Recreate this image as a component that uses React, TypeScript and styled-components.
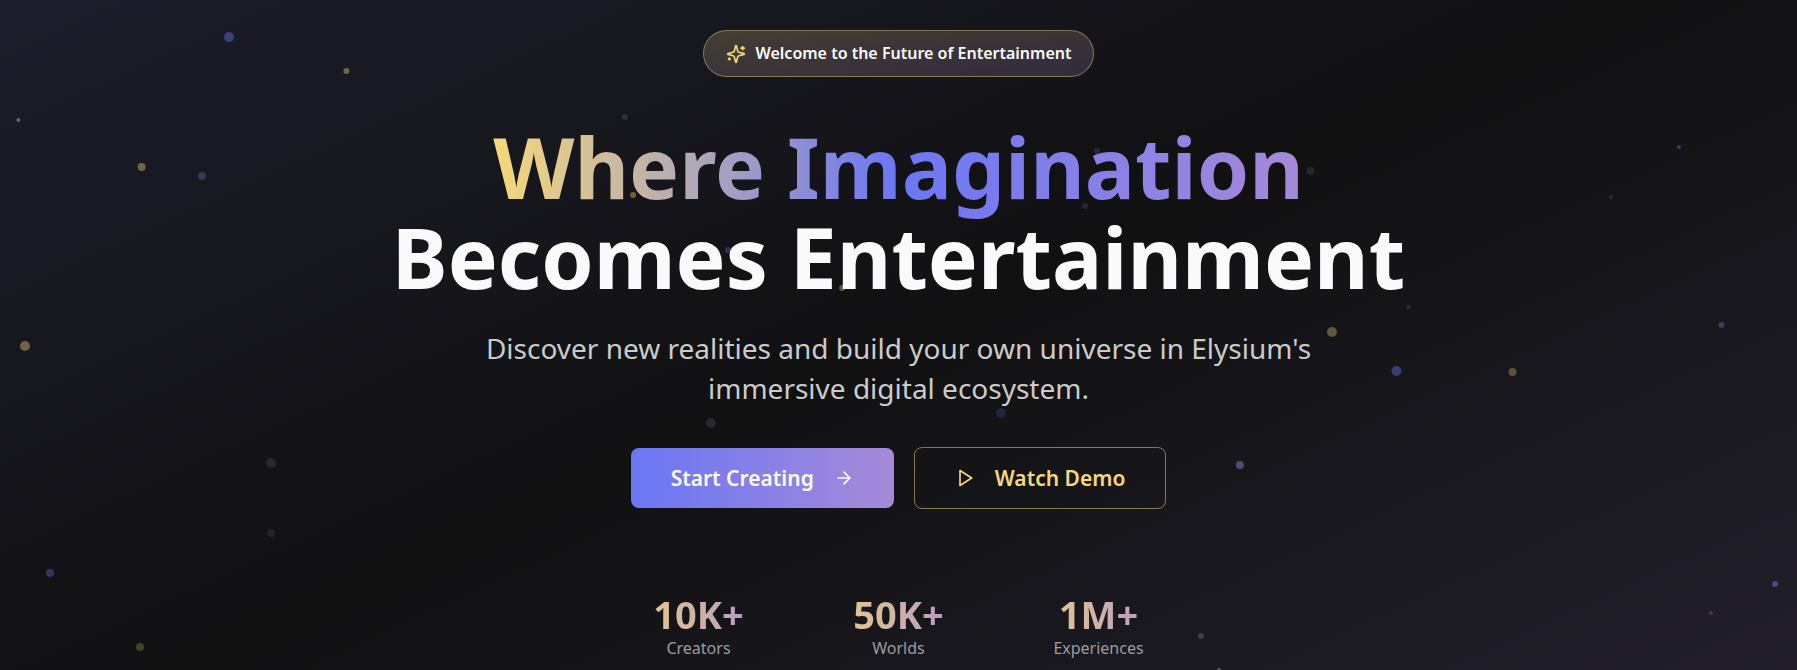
import React from "react";
import styled, { createGlobalStyle } from "styled-components";

const GlobalStyle = createGlobalStyle`
  *, *::before, *::after { box-sizing: border-box; }
  body {
    margin: 0;
    background: #111112;
    color: #fafafa;
    font-family: "Noto Sans", "Liberation Sans", sans-serif;
  }
`;

const GOLD = "#f5d87a";
const BLUE = "#6b76f5";
const LILAC = "#a58ad8";

const Hero = styled.main`
  position: relative;
  display: flex;
  flex-direction: column;
  align-items: center;
  min-height: 100vh;
  padding: 30px 24px 10px;
  overflow: hidden;
  text-align: center;
  background: linear-gradient(to bottom right, #1e1e2e, #111112 50%, #23202d) 0 -73px / 100% 827px no-repeat;
`;

const Sky = styled.svg`
  position: absolute;
  inset: 0;
  width: 100%;
  height: 100%;
  pointer-events: none;
`;

const Content = styled.div`
  position: relative;
  display: flex;
  flex-direction: column;
  align-items: center;
  width: 100%;
  max-width: 1152px;
`;

const Badge = styled.div`
  display: flex;
  align-items: center;
  gap: 10px;
  padding: 10px 22px;
  border: 1px solid rgba(248, 219, 123, 0.4);
  border-radius: 24px;
  background: linear-gradient(to bottom right, rgba(248, 219, 123, 0.2), rgba(165, 138, 216, 0.2));
  font-size: 16px;
  font-weight: 600;
  line-height: 25px;
`;

const Title = styled.h1`
  margin: 45px 0 0;
  font-size: 84px;
  font-weight: 700;
  line-height: 90px;
`;

/* The extra padding lets the clipped gradient reach the descenders. */
const TitleAccent = styled.span`
  display: block;
  width: fit-content;
  margin: 0 auto -16px;
  padding-bottom: 16px;
  background: linear-gradient(to right, ${GOLD}, ${BLUE} 50%, ${LILAC});
  background-clip: text;
  color: transparent;
`;

const TitleLine = styled.span`
  display: block;
`;

const Lead = styled.p`
  max-width: 896px;
  margin: 26px 0 0;
  color: #cbcbcc;
  font-size: 28px;
  line-height: 40px;
`;

const Actions = styled.div`
  display: flex;
  flex-wrap: wrap;
  align-items: center;
  justify-content: center;
  gap: 20px;
  margin-top: 39px;
`;

const Button = styled.button<{ $outline?: boolean }>`
  display: flex;
  align-items: center;
  gap: 20px;
  padding: 16px 40px;
  border: ${(p) => (p.$outline ? "1px solid rgba(248, 219, 123, 0.5)" : "0")};
  border-radius: 8px;
  background: ${(p) => (p.$outline ? "transparent" : `linear-gradient(to right, ${BLUE}, ${LILAC})`)};
  color: ${(p) => (p.$outline ? GOLD : "#fafafa")};
  font-family: inherit;
  font-size: 21px;
  font-weight: 600;
  line-height: 28px;
  cursor: pointer;
`;

const Icon = styled.svg`
  flex: none;
  width: 20px;
  height: 20px;
  fill: none;
  stroke: currentColor;
  stroke-width: 2;
  stroke-linecap: round;
  stroke-linejoin: round;
`;

const GoldIcon = styled(Icon)`
  color: ${GOLD};
`;

const Stats = styled.dl`
  display: grid;
  grid-template-columns: repeat(3, 1fr);
  gap: 24px;
  width: 100%;
  max-width: 576px;
  margin: 83px 0 0;
`;

const Stat = styled.div`
  display: flex;
  flex-direction: column-reverse;
`;

const StatValue = styled.dd`
  margin: 0;
  background: linear-gradient(to right, ${GOLD}, ${LILAC});
  background-clip: text;
  color: transparent;
  font-size: 38px;
  font-weight: 700;
  line-height: 44px;
`;

const StatLabel = styled.dt`
  color: #9c9c9e;
  font-size: 16px;
  line-height: 24px;
`;

type Particle = [left: number, top: number, radius: number, color: string, opacity: number];

const particles: Particle[] = [
  [12.74, 37, 5, BLUE, 0.42],
  [19.28, 71, 3, GOLD, 0.4],
  [1.02, 120, 2, GOLD, 0.4],
  [7.88, 167, 4, GOLD, 0.4],
  [11.24, 176, 4, LILAC, 0.26],
  [34.77, 117, 3, LILAC, 0.2],
  [35.23, 195, 3, GOLD, 0.4],
  [40.51, 250, 3, BLUE, 0.3],
  [46.86, 288, 3, GOLD, 0.35],
  [61.05, 151, 3, LILAC, 0.18],
  [72.93, 171, 4, LILAC, 0.15],
  [60.38, 206, 3, LILAC, 0.16],
  [63.94, 196, 2, GOLD, 0.35],
  [93.43, 147, 2, BLUE, 0.38],
  [89.65, 197, 2, BLUE, 0.22],
  [78.38, 307, 2, LILAC, 0.2],
  [95.8, 325, 3, LILAC, 0.3],
  [1.39, 346, 5, GOLD, 0.4],
  [15.08, 463, 5, LILAC, 0.15],
  [15.08, 533, 4, LILAC, 0.14],
  [2.78, 573, 4, BLUE, 0.34],
  [7.79, 647, 4, GOLD, 0.24],
  [39.55, 423, 5, LILAC, 0.17],
  [55.7, 413, 5, BLUE, 0.18],
  [74.12, 332, 5, GOLD, 0.34],
  [77.71, 371, 5, BLUE, 0.42],
  [84.17, 372, 4, GOLD, 0.32],
  [69, 465, 4, LILAC, 0.45],
  [98.78, 584, 3, BLUE, 0.5],
  [95.21, 613, 2, BLUE, 0.35],
  [66.83, 636, 3, GOLD, 0.2],
  [67.84, 670, 2, GOLD, 0.35],
];

const stats = [
  { value: "10K+", label: "Creators" },
  { value: "50K+", label: "Worlds" },
  { value: "1M+", label: "Experiences" },
];

export default function App() {
  return (
    <>
      <GlobalStyle />
      <Hero>
        <Sky aria-hidden="true">
          {particles.map(([left, top, radius, color, opacity]) => (
            <circle key={`${left}-${top}`} cx={`${left}%`} cy={top} r={radius} fill={color} opacity={opacity} />
          ))}
        </Sky>
        <Content>
          <Badge>
            <GoldIcon viewBox="0 0 24 24" aria-hidden="true">
              <path d="M9.937 15.5A2 2 0 0 0 8.5 14.063l-6.135-1.582a.5.5 0 0 1 0-.962L8.5 9.936A2 2 0 0 0 9.937 8.5l1.582-6.135a.5.5 0 0 1 .963 0L14.063 8.5A2 2 0 0 0 15.5 9.937l6.135 1.581a.5.5 0 0 1 0 .964L15.5 14.063a2 2 0 0 0-1.437 1.437l-1.582 6.135a.5.5 0 0 1-.963 0z" />
              <path d="M20 3v4" />
              <path d="M22 5h-4" />
              <path d="M4 17v2" />
              <path d="M5 18H3" />
            </GoldIcon>
            <span>Welcome to the Future of Entertainment</span>
          </Badge>
          <Title>
            <TitleAccent>Where Imagination</TitleAccent>
            <TitleLine>Becomes Entertainment</TitleLine>
          </Title>
          <Lead>
            Discover new realities and build your own universe in Elysium's immersive digital ecosystem.
          </Lead>
          <Actions>
            <Button type="button">
              Start Creating
              <Icon viewBox="0 0 24 24" aria-hidden="true">
                <path d="M5 12h14" />
                <path d="m12 5 7 7-7 7" />
              </Icon>
            </Button>
            <Button type="button" $outline>
              <Icon viewBox="0 0 24 24" aria-hidden="true">
                <polygon points="6 3 20 12 6 21 6 3" />
              </Icon>
              Watch Demo
            </Button>
          </Actions>
          <Stats>
            {stats.map((s) => (
              <Stat key={s.label}>
                <StatLabel>{s.label}</StatLabel>
                <StatValue>{s.value}</StatValue>
              </Stat>
            ))}
          </Stats>
        </Content>
      </Hero>
    </>
  );
}
